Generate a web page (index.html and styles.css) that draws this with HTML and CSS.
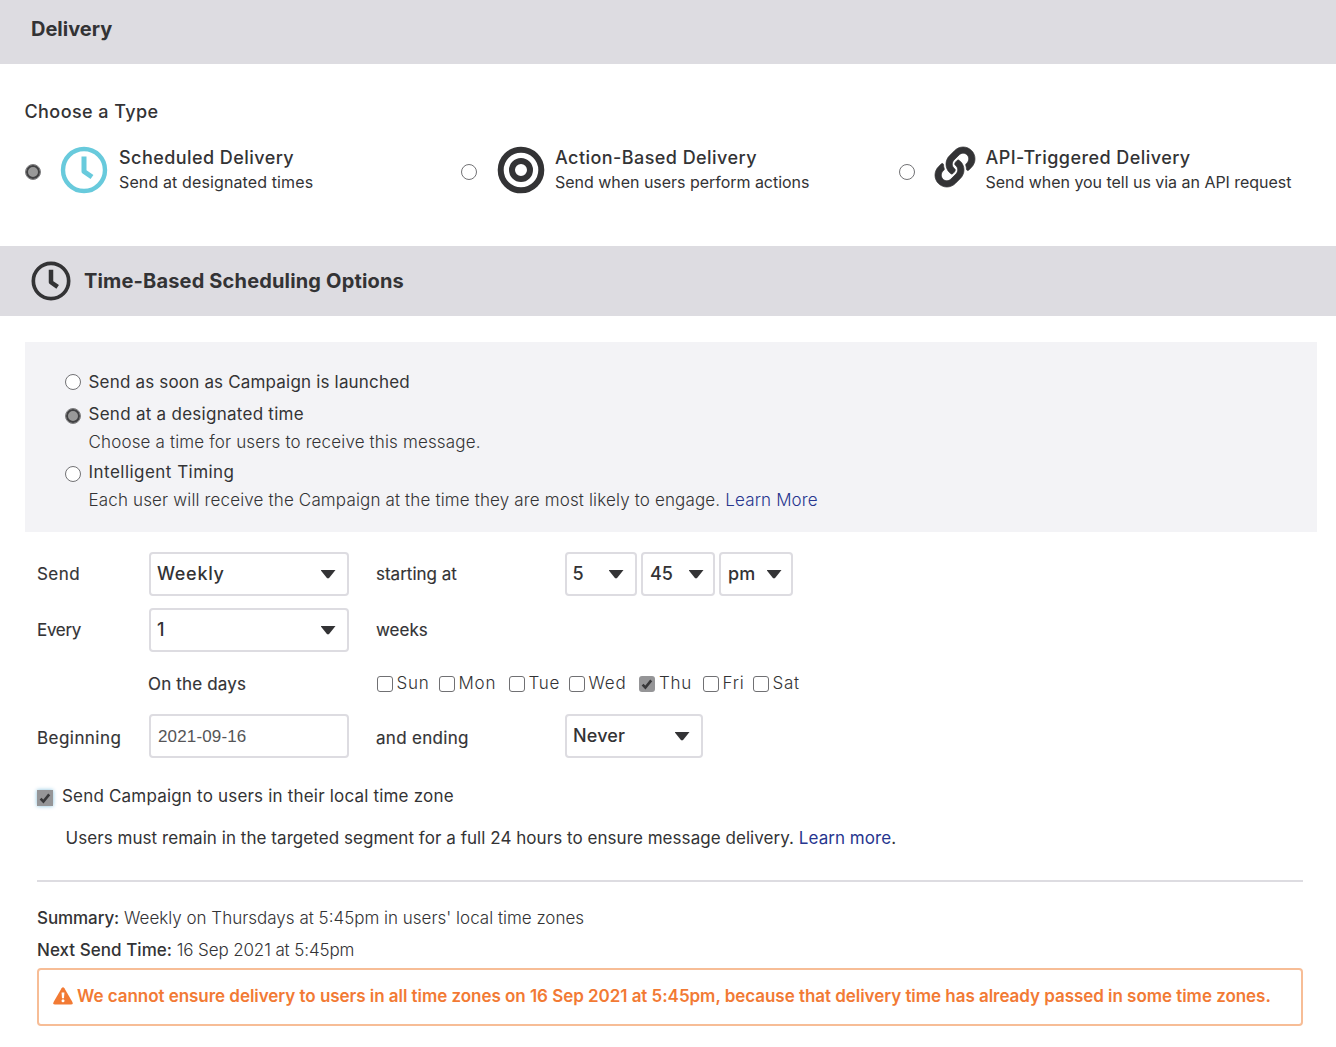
FILE: index.html
```html
<!DOCTYPE html>
<html lang="en">
<head>
<meta charset="utf-8">
<title>Delivery</title>
<link rel="stylesheet" href="styles.css">
</head>
<body>
<header class="band band-top"><h1 class="band-title">Delivery</h1></header>

<section class="types">
  <h2 class="types-title">Choose a Type</h2>
  <div class="type-list">
    <label class="type">
      <input class="radio" type="radio" name="type" checked>
      <svg class="type-icon clock-blue" viewBox="0 0 48 48" fill="none" stroke="currentColor"><circle cx="24" cy="24" r="21" stroke-width="4.4"/><path d="M24 10.5V25.5L32 31" stroke-width="5" stroke-linejoin="round"/></svg>
      <span class="type-text"><span class="type-name">Scheduled Delivery</span><span class="type-desc spaced">Send at designated times</span></span>
    </label>
    <label class="type">
      <input class="radio" type="radio" name="type">
      <svg class="type-icon" viewBox="0 0 48 48" fill="none" stroke="currentColor"><circle cx="24" cy="24" r="20.3" stroke-width="6"/><circle cx="24" cy="24" r="9" stroke-width="6"/></svg>
      <span class="type-text"><span class="type-name">Action-Based Delivery</span><span class="type-desc">Send when users perform actions</span></span>
    </label>
    <label class="type">
      <input class="radio" type="radio" name="type">
      <svg class="type-icon link-icon" viewBox="0 0 512 512" fill="currentColor" stroke="currentColor" stroke-width="9"><path d="M326.612 185.391c59.747 59.809 58.927 155.698.36 214.59-.11.12-.24.25-.36.37l-67.2 67.2c-59.27 59.27-155.699 59.262-214.96 0-59.27-59.26-59.27-155.7 0-214.96l37.106-37.106c9.84-9.84 26.786-3.3 27.294 10.606.648 17.722 3.826 35.527 9.69 52.721 1.986 5.822.567 12.262-3.783 16.612l-13.087 13.087c-28.026 28.026-28.905 73.66-1.155 101.96 28.024 28.579 74.086 28.749 102.325.51l67.2-67.19c28.191-28.191 28.073-73.757 0-101.83-3.701-3.694-7.429-6.564-10.341-8.569a16.037 16.037 0 0 1-6.947-12.606c-.396-10.567 3.348-21.456 11.698-29.806l21.054-21.055c5.521-5.521 14.182-6.199 20.584-1.731a152.482 152.482 0 0 1 20.522 17.197zM467.547 44.449c-59.261-59.262-155.69-59.27-214.96 0l-67.2 67.2c-.12.12-.25.25-.36.37-58.566 58.892-59.387 154.781.36 214.59a152.454 152.454 0 0 0 20.521 17.196c6.402 4.468 15.064 3.789 20.584-1.731l21.054-21.055c8.35-8.35 12.094-19.239 11.698-29.806a16.037 16.037 0 0 0-6.947-12.606c-2.912-2.005-6.64-4.875-10.341-8.569-28.073-28.073-28.191-73.639 0-101.83l67.2-67.19c28.239-28.239 74.3-28.069 102.325.51 27.75 28.3 26.872 73.934-1.155 101.96l-13.087 13.087c-4.35 4.35-5.769 10.79-3.783 16.612 5.864 17.194 9.042 34.999 9.69 52.721.509 13.906 17.454 20.446 27.294 10.606l37.106-37.106c59.271-59.259 59.271-155.699.001-214.959z"/></svg>
      <span class="type-text"><span class="type-name">API-Triggered Delivery</span><span class="type-desc">Send when you tell us via an API request</span></span>
    </label>
  </div>
</section>

<div class="band band-options">
  <svg class="band-icon" viewBox="0 0 48 48" fill="none" stroke="currentColor"><circle cx="24" cy="24" r="21.2" stroke-width="4.4"/><path d="M24 10.5V25.5L32 31" stroke-width="5.4" stroke-linejoin="round"/></svg>
  <h2 class="band-title">Time-Based Scheduling Options</h2>
</div>

<section class="timing">
  <label class="timing-row first"><input class="radio" type="radio" name="timing"><span>Send as soon as Campaign is launched</span></label>
  <label class="timing-row"><input class="radio lowered" type="radio" name="timing" checked><span class="designated">Send at a designated time</span></label>
  <p class="hint">Choose a time for users to receive this message.</p>
  <label class="timing-row"><input class="radio lowered" type="radio" name="timing"><span class="intelligent">Intelligent Timing</span></label>
  <p class="hint">Each user will receive the Campaign at the time they are most likely to engage. <a href="#">Learn More</a></p>
</section>

<section class="schedule">
  <div class="row">
    <span class="label wide">Send</span>
    <div class="select"><span class="roomy">Weekly</span><i class="caret"></i></div>
    <span class="label">starting at</span>
    <div class="time">
      <div class="select hour"><span>5</span><i class="caret"></i></div>
      <div class="select minute"><span>45</span><i class="caret"></i></div>
      <div class="select period"><span>pm</span><i class="caret"></i></div>
    </div>
  </div>
  <div class="row">
    <span class="label tight">Every</span>
    <div class="select"><span>1</span><i class="caret"></i></div>
    <span class="label">weeks</span>
  </div>
  <div class="row row-days">
    <span class="label days-label">On the days</span>
    <div class="days">
      <label class="day"><input class="check" type="checkbox">Sun</label>
      <label class="day"><input class="check" type="checkbox">Mon</label>
      <label class="day"><input class="check" type="checkbox">Tue</label>
      <label class="day"><input class="check" type="checkbox">Wed</label>
      <label class="day"><span class="check checked"><svg viewBox="0 0 16 16"><path d="M3.6 8.6L6.4 11.6L12.2 4.4"/></svg></span>Thu</label>
      <label class="day"><input class="check" type="checkbox">Fri</label>
      <label class="day"><input class="check" type="checkbox">Sat</label>
    </div>
  </div>
  <div class="row row-dates">
    <span class="label wide lower">Beginning</span>
    <input class="date" type="text" value="2021-09-16">
    <span class="label lower ending-label">and ending</span>
    <div class="select ending"><span>Never</span><i class="caret"></i></div>
  </div>
  <label class="zone"><span class="check checked focused"><svg viewBox="0 0 16 16"><path d="M3.6 8.6L6.4 11.6L12.2 4.4"/></svg></span><span>Send Campaign to users in their local time zone</span></label>
  <p class="note">Users must remain in the targeted segment for a full 24 hours to ensure message delivery. <a href="#">Learn more</a>.</p>
</section>

<section class="summary">
  <p><b>Summary:</b> Weekly on Thursdays at 5:45pm in users' local time zones</p>
  <p class="next"><b>Next Send Time:</b> 16 Sep 2021 at 5:45pm</p>
  <div class="warning">
    <svg class="warning-icon" viewBox="0 0 20 18"><path d="M8.6 1.2Q10 -.8 11.4 1.2L19.4 15Q20.4 17.4 18 17.6H2Q-.4 17.4.6 15Z" fill="#f27a34"/><path d="M8.6 5.5H11.4L11 11.3H9Z" fill="#fff"/><circle cx="10" cy="13.8" r="1.5" fill="#fff"/></svg>
    <span>We cannot ensure delivery to users in all time zones on 16 Sep 2021 at 5:45pm, because that delivery time has already passed in some time zones.</span>
  </div>
</section>
</body>
</html>
```
FILE: styles.css
```css
* { box-sizing: border-box; }
body { margin: 0; background: #fff; color: #333335; font: 400 17px/24px Inter, "Liberation Sans", sans-serif; }
h1, h2, p { margin: 0; }
a { color: #27368f; text-decoration: none; }

.band { display: flex; align-items: center; background: #dddce1; }
.band-top { height: 64px; padding: 0 31px 6px; }
.band-options { height: 70px; padding: 0 31px; gap: 13px; }
.band-icon { width: 40px; height: 40px; }
.band-title { font-size: 20px; line-height: 24px; font-weight: 700; }
.band-options .band-title { letter-spacing: .16px; }

.types { height: 182px; padding: 36px 25px 0; }
.types-title { margin-left: -.5px; font-size: 18px; line-height: 24px; font-weight: 500; letter-spacing: .42px; }
.type-list { display: grid; grid-template-columns: 436px 438px 1fr; margin-top: 20px; }
.type { display: flex; white-space: nowrap; }
.type .radio { margin-top: 20px; }
.type-icon { flex: none; width: 48px; height: 48px; margin: 2px 10px 0 19px; }
.clock-blue { color: #68cadc; }
.type:nth-child(1) .type-icon { margin-right: 11px; }
.type:nth-child(2) .type-icon { margin-left: 20px; }
.type .link-icon { width: 40px; height: 40px; margin: 3px 10.5px 0 20px; overflow: visible; }
.type-text { display: flex; flex-direction: column; padding-top: 1px; }
.type-name { font-size: 18px; font-weight: 500; letter-spacing: .44px; line-height: 25px; }
.type-desc { font-size: 16px; line-height: 25px; letter-spacing: -.03px; }
.type-desc.spaced { letter-spacing: .12px; }

.radio { appearance: none; flex: none; width: 16px; height: 16px; margin: 0; border: 1px solid #727275; border-radius: 50%; background: #fff; }
.radio:checked { border-color: #7e7e80; background: #999; box-shadow: inset 0 0 0 2px #414143; }

.timing { height: 190px; margin: 26px 19px 0 25px; padding: 28px 40px 0; background: #f3f3f6; letter-spacing: .15px; }
.timing-row { display: flex; align-items: center; gap: 7.5px; height: 28px; }
.timing-row.first { height: 24px; margin-bottom: 6px; letter-spacing: .18px; }
.timing-row .lowered { position: relative; top: 2px; }
.designated { letter-spacing: .27px; }
.intelligent { letter-spacing: .47px; }
.hint { height: 30px; padding-left: 23.5px; line-height: 28px; font-weight: 300; }

.schedule { margin: 20px 33px 0 37px; padding-bottom: 30px; border-bottom: 2px solid #dddce1; }
.row { display: grid; grid-template-columns: 112px 227px 189px 1fr; align-items: center; height: 44px; margin-bottom: 12px; }
.label { -webkit-text-stroke: .15px currentColor; }
.label.wide { letter-spacing: .45px; }
.label.tight { letter-spacing: -.3px; }
.ending-label { letter-spacing: .3px; }
.select { display: flex; align-items: center; justify-content: space-between; width: 200px; height: 44px; padding: 0 11.5px 0 6px; border: 2px solid #dddce1; border-radius: 4px; font-size: 18px; font-weight: 500; }
.roomy { letter-spacing: .7px; }
.caret { width: 15px; height: 9px; background: #333335; clip-path: polygon(3% 0, 97% 0, 100% 6%, 56% 96%, 44% 96%, 0 6%); }
.time { display: flex; gap: 5px; }
.hour { width: 72px; padding-left: 5.5px; }
.minute, .period { width: 74px; padding-left: 7px; padding-right: 9.5px; margin-left: -1px; }
.row-days { grid-template-columns: 227px 1fr; height: 24px; margin: 20px 0 18px; padding-left: 111px; }
.days-label { letter-spacing: .15px; }
.days { display: grid; grid-template-columns: 62px 70px 60px 70px 64px 50px 60px; padding-left: 2px; font-weight: 300; letter-spacing: .75px; }
.day { display: flex; align-items: center; gap: 3.5px; line-height: 22px; padding-bottom: 2px; }
.check { appearance: none; flex: none; width: 16px; height: 16px; margin: 0; border: 1px solid #707073; border-radius: 3px; background: #fff; position: relative; top: 1px; }
.checked { display: block; border: 0; background: #959597; }
.checked svg { display: block; width: 16px; height: 16px; fill: none; stroke: #38383a; stroke-width: 2.6; }
.day .checked { margin-right: .5px; }
.focused { top: 2px; border-radius: 0; box-shadow: 0 0 4px #83bedb; }
.row-dates { margin-bottom: 0; }
.lower { padding-top: 3px; }
.date { width: 200px; height: 44px; padding: 2px 7px 0; border: 2px solid #dddce1; border-radius: 4px; color: #555557; background: #fff; font: 17px "Liberation Sans", sans-serif; letter-spacing: .15px; }
.ending { width: 138px; letter-spacing: .15px; }
.zone { display: flex; align-items: center; gap: 9px; height: 24px; margin-top: 26px; letter-spacing: .19px; }
.note { margin: 18px 0 0 28.5px; letter-spacing: .05px; }

.summary { margin: 24px 33px 0 37px; font-weight: 300; }
.summary b { font-weight: 500; letter-spacing: -.08px; }
.next { margin-top: 8px; letter-spacing: -.12px; }
.next b { letter-spacing: .04px; }
.warning { display: flex; align-items: center; gap: 4px; height: 58px; margin-top: 6px; padding: 0 14px 2px; border: 2px solid #f7bd96; border-radius: 4px; color: #f27a34; font-weight: 600; letter-spacing: -.04px; white-space: nowrap; }
.warning-icon { flex: none; width: 20px; height: 18px; }
```
